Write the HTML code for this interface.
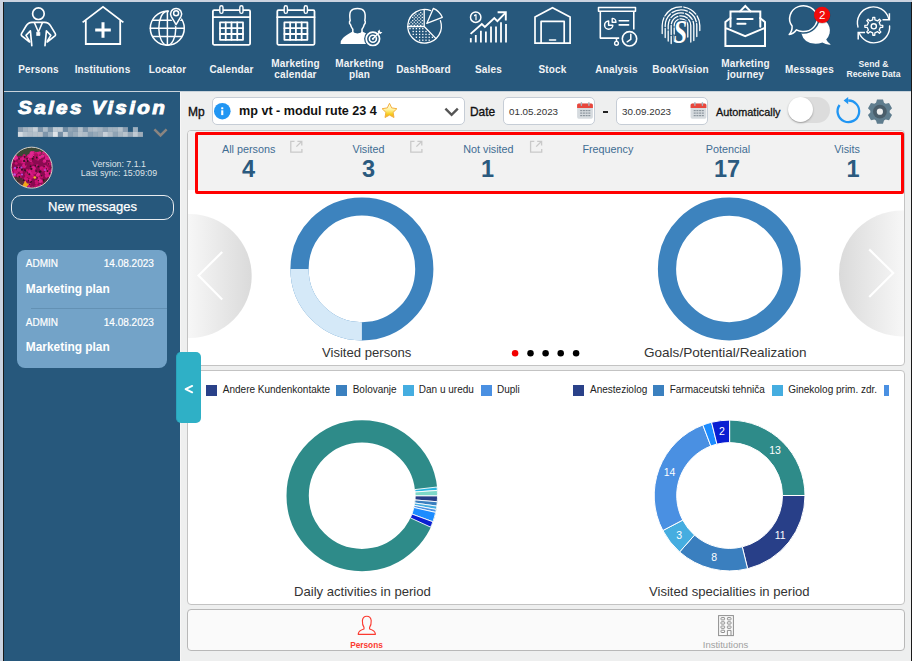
<!DOCTYPE html>
<html><head><meta charset="utf-8">
<style>
*{margin:0;padding:0;box-sizing:border-box}
html,body{width:912px;height:661px;overflow:hidden;background:#cbd3e0;font-family:"Liberation Sans",sans-serif}
.abs{position:absolute}
#app{position:absolute;left:3px;top:2px;width:909px;height:659px;background:#27587c;border-left:1px solid #1a1a1a;border-right:1px solid #1a1a1a}
.hl{position:absolute;color:#f2f4f6;font-weight:bold;font-size:10px;letter-spacing:0.15px;text-align:center;white-space:nowrap;line-height:10.5px}
#main{position:absolute;left:180px;top:92px;width:731px;height:569px;background:#eeefef}
.panel{position:absolute;background:#fff;border:1px solid #c3c3c3;border-radius:4px}
.lbl{position:absolute;color:#3f6d92;font-size:10.8px;white-space:nowrap}
.num{position:absolute;color:#2b5a7f;font-size:23.5px;font-weight:bold;white-space:nowrap;line-height:24px}
.ctitle{position:absolute;color:#333;font-size:13.1px;white-space:nowrap}
.leg{position:absolute;font-size:10px;color:#222;white-space:nowrap;margin-top:0.5px}
.msg{color:#fff;font-size:10px;line-height:11px;white-space:nowrap;-webkit-text-stroke:0.2px #fff}
.msgt{color:#fff;font-size:11.9px;font-weight:bold;line-height:13px;white-space:nowrap}
.sq{position:absolute;width:11px;height:10.5px}
</style></head><body>
<div id="app"></div>
<!-- header separator line -->
<div class="abs" style="left:4px;top:91px;width:907px;height:1px;background:#c9d3db"></div>


<svg class="abs" style="left:0;top:0" width="912" height="92" viewBox="0 0 912 92" fill="none" stroke="#fff" stroke-linecap="round" stroke-linejoin="round">
<!-- persons -->
<circle cx="38.4" cy="13.7" r="5.8" stroke-width="1.7"/>
<path stroke-width="1.65" d="M31.8,45.6 L30.4,30.8 L26,35.4 L29.2,40.6 M29.6,42 L21.8,35.8 Q20.8,34.8 21.5,33.6 L26.2,25.8 Q28.2,22.4 32,22.4 L44.8,22.4 Q48.6,22.4 50.6,25.8 L55.3,33.6 Q56,34.8 55,35.8 L47.2,42 M47.6,40.6 L50.8,35.4 L46.4,30.8 L45,45.6"/>
<path stroke-width="1.5" d="M34.4,22.6 L38.4,32 L42.4,22.6"/>
<rect x="36.9" y="32.2" width="3" height="3.3" fill="#fff" stroke-width="0.7"/>
<!-- institutions -->
<path stroke-width="1.8" stroke-linecap="butt" stroke-linejoin="miter" d="M82.6,22.4 L103,6.8 L123.4,22.4 M85.8,20.2 L85.8,44 L120.2,44 L120.2,20.2"/>
<path stroke-width="3" stroke-linecap="butt" d="M95.2,30 L110.8,30 M103,22.2 L103,37.8"/>
<!-- locator -->
<circle cx="167.3" cy="28.2" r="17" stroke-width="1.5"/>
<line x1="167.4" y1="11.2" x2="167.4" y2="45.2" stroke-width="1.5"/>
<ellipse cx="167.3" cy="28.2" rx="8.5" ry="17" stroke-width="1.5"/>
<line x1="150.3" y1="28.2" x2="184.3" y2="28.2" stroke-width="1.5"/>
<line x1="152.8" y1="20.2" x2="181.8" y2="20.2" stroke-width="1.5"/>
<line x1="152.8" y1="36.4" x2="181.8" y2="36.4" stroke-width="1.5"/>
<path fill="#27587c" stroke="#27587c" stroke-width="2.6" d="M176.1,24.9 L171.1,16.6 A6.1,6.1 0 1 1 181.1,16.6 Z"/>
<path fill="#27587c" stroke-width="1.5" d="M176.1,24.6 L171.3,16.6 A5.5,5.5 0 1 1 180.9,16.6 Z"/>
<circle cx="176.1" cy="13.2" r="2.5" stroke-width="1.5"/>
<!-- calendars -->
<g transform="translate(0,0)">
<rect x="212.9" y="10.2" width="37.2" height="34.6" rx="1.2" stroke-width="1.8"/>
<line x1="212.9" y1="17.2" x2="250.1" y2="17.2" stroke-width="1.8"/>
<rect x="219.8" y="5.8" width="3.2" height="7.6" rx="1.6" fill="#27587c" stroke-width="1.4"/>
<rect x="239.8" y="5.8" width="3.2" height="7.6" rx="1.6" fill="#27587c" stroke-width="1.4"/>
<rect x="220" y="22.4" width="23" height="17.4" stroke-width="1.8"/>
<line x1="225.75" y1="22.4" x2="225.75" y2="39.8" stroke-width="1.8"/>
<line x1="231.5" y1="22.4" x2="231.5" y2="39.8" stroke-width="1.8"/>
<line x1="237.25" y1="22.4" x2="237.25" y2="39.8" stroke-width="1.8"/>
<line x1="220" y1="28.2" x2="243" y2="28.2" stroke-width="1.8"/>
<line x1="220" y1="34" x2="243" y2="34" stroke-width="1.8"/>
</g>
<g transform="translate(64.4,0)">
<rect x="212.9" y="10.2" width="37.2" height="34.6" rx="1.2" stroke-width="1.8"/>
<line x1="212.9" y1="17.2" x2="250.1" y2="17.2" stroke-width="1.8"/>
<rect x="219.8" y="5.8" width="3.2" height="7.6" rx="1.6" fill="#27587c" stroke-width="1.4"/>
<rect x="239.8" y="5.8" width="3.2" height="7.6" rx="1.6" fill="#27587c" stroke-width="1.4"/>
<rect x="220" y="22.4" width="23" height="17.4" stroke-width="1.8"/>
<line x1="225.75" y1="22.4" x2="225.75" y2="39.8" stroke-width="1.8"/>
<line x1="231.5" y1="22.4" x2="231.5" y2="39.8" stroke-width="1.8"/>
<line x1="237.25" y1="22.4" x2="237.25" y2="39.8" stroke-width="1.8"/>
<line x1="220" y1="28.2" x2="243" y2="28.2" stroke-width="1.8"/>
<line x1="220" y1="34" x2="243" y2="34" stroke-width="1.8"/>
</g>
<!-- marketing plan -->
<path stroke-width="1.5" d="M352.8,32.6 L352.8,29.2 Q351,27 350.4,24.4 Q349.2,23.8 349.5,21.8 Q349.8,21 350.2,20.6 Q349.2,14 350.6,11.4 Q352.6,8.6 357.4,8.6 Q362.4,8.6 364.2,11.4 Q365.8,14 364.8,20.6 Q365.4,21.2 365.3,22 Q365.4,23.8 364.3,24.4 Q363.8,27 362,29.2 L362,32.6"/>
<path fill="#fff" stroke="none" d="M352.6,31.6 Q353.8,33.4 357.4,33.4 Q361,33.4 362.2,31.6 L368,34.2 L376,44 L340.6,44 Q340.6,40 343,38 Q345,35.8 352.6,31.6Z"/>
<circle cx="372.9" cy="38.8" r="8.8" fill="#27587c" stroke="none"/>
<circle cx="372.9" cy="38.8" r="6.7" stroke-width="1.7"/>
<circle cx="372.9" cy="38.8" r="3.5" stroke-width="1.6"/>
<circle cx="372.9" cy="38.8" r="1.1" fill="#fff" stroke="none"/>
<line x1="373.2" y1="38.5" x2="379" y2="32.6" stroke-width="1.4"/>
<path fill="#fff" stroke="none" d="M377.6,31.6 L379.6,29.4 L380,31.8 L382.4,32.2 L380.2,34.2 Z"/>
<!-- dashboard -->
<g fill="#fff" stroke="none"><rect x="420.10" y="12.00" width="1.2" height="1.2"/><rect x="415.30" y="13.60" width="1.2" height="1.2"/><rect x="418.50" y="13.60" width="1.2" height="1.2"/><rect x="421.70" y="13.60" width="1.2" height="1.2"/><rect x="413.70" y="15.20" width="1.2" height="1.2"/><rect x="416.90" y="15.20" width="1.2" height="1.2"/><rect x="420.10" y="15.20" width="1.2" height="1.2"/><rect x="412.10" y="16.80" width="1.2" height="1.2"/><rect x="415.30" y="16.80" width="1.2" height="1.2"/><rect x="418.50" y="16.80" width="1.2" height="1.2"/><rect x="421.70" y="16.80" width="1.2" height="1.2"/><rect x="413.70" y="18.40" width="1.2" height="1.2"/><rect x="416.90" y="18.40" width="1.2" height="1.2"/><rect x="420.10" y="18.40" width="1.2" height="1.2"/><rect x="412.10" y="20.00" width="1.2" height="1.2"/><rect x="415.30" y="20.00" width="1.2" height="1.2"/><rect x="418.50" y="20.00" width="1.2" height="1.2"/><rect x="421.70" y="20.00" width="1.2" height="1.2"/><rect x="410.50" y="21.60" width="1.2" height="1.2"/><rect x="413.70" y="21.60" width="1.2" height="1.2"/><rect x="416.90" y="21.60" width="1.2" height="1.2"/><rect x="420.10" y="21.60" width="1.2" height="1.2"/><rect x="408.90" y="23.20" width="1.2" height="1.2"/><rect x="412.10" y="23.20" width="1.2" height="1.2"/><rect x="415.30" y="23.20" width="1.2" height="1.2"/><rect x="418.50" y="23.20" width="1.2" height="1.2"/><rect x="421.70" y="23.20" width="1.2" height="1.2"/><rect x="410.50" y="24.80" width="1.2" height="1.2"/><rect x="413.70" y="24.80" width="1.2" height="1.2"/><rect x="416.90" y="24.80" width="1.2" height="1.2"/><rect x="420.10" y="24.80" width="1.2" height="1.2"/><rect x="409.35" y="27.95" width="1.3" height="1.3"/><rect x="412.55" y="27.95" width="1.3" height="1.3"/><rect x="415.75" y="27.95" width="1.3" height="1.3"/><rect x="418.95" y="27.95" width="1.3" height="1.3"/><rect x="422.15" y="27.95" width="1.3" height="1.3"/><rect x="412.55" y="30.85" width="1.3" height="1.3"/><rect x="415.75" y="30.85" width="1.3" height="1.3"/><rect x="418.95" y="30.85" width="1.3" height="1.3"/><rect x="422.15" y="30.85" width="1.3" height="1.3"/><rect x="425.35" y="30.85" width="1.3" height="1.3"/><rect x="412.55" y="33.75" width="1.3" height="1.3"/><rect x="415.75" y="33.75" width="1.3" height="1.3"/><rect x="418.95" y="33.75" width="1.3" height="1.3"/><rect x="422.15" y="33.75" width="1.3" height="1.3"/><rect x="425.35" y="33.75" width="1.3" height="1.3"/><rect x="428.55" y="33.75" width="1.3" height="1.3"/><rect x="415.75" y="36.65" width="1.3" height="1.3"/><rect x="418.95" y="36.65" width="1.3" height="1.3"/><rect x="422.15" y="36.65" width="1.3" height="1.3"/><rect x="425.35" y="36.65" width="1.3" height="1.3"/><rect x="428.55" y="36.65" width="1.3" height="1.3"/><rect x="431.75" y="36.65" width="1.3" height="1.3"/><rect x="418.95" y="39.55" width="1.3" height="1.3"/><rect x="422.15" y="39.55" width="1.3" height="1.3"/><rect x="425.35" y="39.55" width="1.3" height="1.3"/><rect x="428.55" y="39.55" width="1.3" height="1.3"/></g>
<path stroke-width="1.3" d="M430.6,10.6 A16.8,16.8 0 1 0 440.4,20.6"/>
<path stroke-width="1.3" d="M424.2,9.7 L424.2,26.5 L407.6,26.5 M424.2,26.5 L435.8,38.4"/>
<path stroke-width="1.3" d="M426.8,23.4 L433.3,8.4 A17,17 0 0 1 442.3,17.3 Z"/>
<!-- sales -->
<g stroke-width="1.8" stroke-linecap="butt">
<line x1="470.8" y1="42.4" x2="470.8" y2="38.1"/>
<line x1="475.8" y1="42.4" x2="475.8" y2="35"/>
<line x1="480.9" y1="42.4" x2="480.9" y2="30.8"/>
<line x1="485.9" y1="42.4" x2="485.9" y2="31.5"/>
<line x1="491" y1="42.4" x2="491" y2="26.6"/>
<line x1="496" y1="42.4" x2="496" y2="26.6"/>
<line x1="501" y1="42.4" x2="501" y2="22.2"/>
<line x1="506" y1="42.4" x2="506" y2="24"/>
</g>
<path stroke-width="1.9" stroke-linecap="butt" stroke-linejoin="miter" d="M470.6,33.9 L481.8,24 L484.9,27 L494.3,18 L497.4,21.2 L505.4,12.8"/>
<path stroke-width="1.9" stroke-linecap="butt" stroke-linejoin="miter" d="M497.6,12.2 L505.8,12.2 L505.8,20.6"/>
<circle cx="475.7" cy="17.2" r="5.2" stroke-width="1.5"/>
<path fill="#fff" stroke="none" d="M475,14.2 L476.6,14.2 L476.6,20.2 L475.4,20.2 L475.4,15.8 L474,16.4 L474,15.2 Z"/>
<!-- stock -->
<path stroke-width="1.7" stroke-linejoin="miter" stroke-linecap="butt" d="M535,43.1 L535,17 L552.5,7.8 L570.1,17 L570.1,43.1 Z"/>
<path stroke-width="1.7" stroke-linecap="butt" d="M541.1,43.1 L541.1,21.4 L564.2,21.4 L564.2,43.1"/>
<line x1="549.5" y1="40" x2="555.6" y2="40" stroke-width="1.5"/>
<!-- analysis -->
<rect x="598.5" y="7.6" width="37" height="3.6" stroke-width="1.5"/>
<path stroke-width="1.6" stroke-linecap="butt" d="M600.3,11.2 L600.3,38.1 L619.2,38.1 M633.8,11.2 L633.8,29.4 M616.5,38.1 L616.5,41"/>
<circle cx="616.5" cy="43.3" r="1.9" stroke-width="1.4"/>
<circle cx="629.5" cy="38.8" r="7.2" stroke-width="1.6"/>
<path stroke-width="1.5" d="M630.8,34.2 L630.8,39.4 L627.2,41.8"/>
<path stroke-width="1.5" d="M608.6,21 A4.1,4.1 0 1 0 612.8,25.2 L608.6,25.2 Z"/>
<path stroke-width="1.4" d="M612.2,18.4 L612.2,22.2 L616,22.2 A3.8,3.8 0 0 0 612.2,18.4 Z"/>
<line x1="619.2" y1="20.7" x2="628.6" y2="20.7" stroke-width="1.6"/>
<line x1="619.2" y1="24.9" x2="628.6" y2="24.9" stroke-width="1.6"/>
<!-- bookvision -->
<g stroke-width="1.3" stroke-linecap="round"><path stroke-dasharray="16 2 20 2.2 14 2.2 30" d="M662.20,33.5 L662.20,25.6 A18.8,18.8 0 0 1 699.80,25.6 L699.80,30.5"/>
<path stroke-dasharray="9 2 14 2 16 2.2 12 2 30" d="M665.20,37.5 L665.20,25.6 A15.8,15.8 0 0 1 696.80,25.6 L696.80,36.5"/>
<path stroke-dasharray="10 2 10 2 14 2 9 2 30" d="M668.20,41 L668.20,25.6 A12.8,12.8 0 0 1 693.80,25.6 L693.80,40.5"/>
<path stroke-dasharray="7 2 9 2 10 2 8 2 30" d="M671.20,43.5 L671.20,25.6 A9.8,9.8 0 0 1 690.80,25.6 L690.80,42"/>
<path stroke-dasharray="5 2 6 2 8 2 30" d="M674.20,41 L674.20,25.6 A6.8,6.8 0 0 1 687.80,25.6 L687.80,37"/></g>
<text x="0" y="0" fill="#fff" stroke="#27587c" stroke-width="2.2" paint-order="stroke" font-family="Liberation Serif" font-style="italic" font-weight="bold" font-size="34" text-anchor="middle" transform="translate(680.4,43.4) scale(0.72,1)">S</text>
<!-- marketing journey -->
<path stroke-width="2" stroke-linejoin="miter" d="M725.4,22 L725.4,45.9 L765,45.9 L765,22 M725.4,22 L730.5,18 M765,22 L760,18 M725.4,27.8 L745.2,36.2 L765,27.8 M740,11.4 L745.3,6 L750.6,11.4"/>
<path stroke-width="2" stroke-linejoin="miter" d="M730.5,26.8 L730.5,11.4 L760.3,11.4 L760.3,26.8"/>
<line x1="737.4" y1="19" x2="752.6" y2="19" stroke-width="2"/>
<line x1="737.4" y1="23.8" x2="745.5" y2="23.8" stroke-width="2"/>
<!-- messages -->
<path fill="#fff" stroke="none" d="M801.2,33 A14.5,13.2 0 1 1 826.2,39.4 Q827.6,42.4 830.8,44.6 Q826,45 822.4,42.6 Q819,43.8 815.6,43.8 Q804,43.8 801.2,33 Z"/>
<path fill="#27587c" stroke="#27587c" stroke-width="4.5" d="M802.2,31.45 A13.8,12.9 0 1 0 792.1,26.0 Q792.4,31.2 789.2,34.5 Q793.6,34 796.5,29.8 Q799.2,31.3 802.2,31.45 Z"/>
<path fill="none" stroke="#fff" stroke-width="1.5" stroke-linejoin="round" d="M802.2,31.45 A13.8,12.9 0 1 0 792.1,26.0 Q792.4,31.2 789.2,34.5 Q793.6,34 796.5,29.8 Q799.2,31.3 802.2,31.45 Z"/>
<circle cx="822.3" cy="15.7" r="8.1" fill="rgba(0,0,0,0.22)" stroke="none"/>
<circle cx="822.1" cy="14.9" r="8.1" fill="#f20a0a" stroke="none"/>
<text x="822.1" y="19" fill="#fff" stroke="none" font-family="Liberation Sans" font-size="11.5" text-anchor="middle">2</text>
<!-- sync -->
<path stroke-width="1.4" d="M858,27 A15.8,15.8 0 0 1 888.7,18.6"/>
<path stroke-width="1.5" stroke-linejoin="miter" stroke-linecap="butt" d="M882.5,19.8 L889.4,19.8 L889.4,13.2"/>
<path stroke-width="1.4" d="M889.6,26 A15.8,15.8 0 0 1 859.2,33"/>
<path stroke-width="1.5" stroke-linejoin="miter" stroke-linecap="butt" d="M865,32.6 L858.2,32.6 L858.2,39.4"/>
<path stroke-width="1.3" d="M872.72,19.79 L872.81,17.35 L874.79,17.35 L874.88,19.79 L877.64,20.93 L879.43,19.28 L880.82,20.67 L879.17,22.46 L880.31,25.22 L882.75,25.31 L882.75,27.29 L880.31,27.38 L879.17,30.14 L880.82,31.93 L879.43,33.32 L877.64,31.67 L874.88,32.81 L874.79,35.25 L872.81,35.25 L872.72,32.81 L869.96,31.67 L868.17,33.32 L866.78,31.93 L868.43,30.14 L867.29,27.38 L864.85,27.29 L864.85,25.31 L867.29,25.22 L868.43,22.46 L866.78,20.67 L868.17,19.28 L869.96,20.93Z"/>
<circle cx="873.8" cy="26.3" r="2.6" stroke-width="1.4"/>
</svg>

<!-- header labels -->
<div class="hl" style="left:8px;top:64.5px;width:61px">Persons</div>
<div class="hl" style="left:72px;top:64.5px;width:61px">Institutions</div>
<div class="hl" style="left:137px;top:64.5px;width:61px">Locator</div>
<div class="hl" style="left:201px;top:64.5px;width:61px">Calendar</div>
<div class="hl" style="left:265px;top:59px;width:61px">Marketing<br>calendar</div>
<div class="hl" style="left:329px;top:59px;width:61px">Marketing<br>plan</div>
<div class="hl" style="left:393px;top:64.5px;width:61px">DashBoard</div>
<div class="hl" style="left:458px;top:64.5px;width:61px">Sales</div>
<div class="hl" style="left:522px;top:64.5px;width:61px">Stock</div>
<div class="hl" style="left:586px;top:64.5px;width:61px">Analysis</div>
<div class="hl" style="left:650px;top:64.5px;width:61px">BookVision</div>
<div class="hl" style="left:715px;top:59px;width:61px">Marketing<br>journey</div>
<div class="hl" style="left:779px;top:64.5px;width:61px">Messages</div>
<div class="hl" style="left:843px;top:60.2px;width:61px;font-size:8.6px;line-height:9.7px;letter-spacing:0.05px">Send &amp;<br>Receive Data</div>

<!-- SIDEBAR -->
<div class="abs" style="left:17.5px;top:98.3px;width:149px;height:20px;color:#fff;font-weight:bold;font-style:italic;font-size:17.5px;letter-spacing:2px;-webkit-text-stroke:0.9px #fff;white-space:nowrap;transform-origin:0 0;transform:scaleX(1.18)">Sales Vision</div>


<svg class="abs" style="left:0;top:92px" width="180" height="140" viewBox="0 92 180 140">
<rect x="17.90" y="127.1" width="5.05" height="4.85" fill="#8a9db0"/><rect x="22.90" y="127.1" width="5.05" height="4.85" fill="#a5b3c0"/><rect x="27.90" y="127.1" width="5.05" height="4.85" fill="#b0bcc7"/><rect x="32.90" y="127.1" width="5.05" height="4.85" fill="#c8d0d8"/><rect x="37.90" y="127.1" width="5.05" height="4.85" fill="#7f96ab"/><rect x="42.90" y="127.1" width="5.05" height="4.85" fill="#aebcc8"/><rect x="47.90" y="127.1" width="5.05" height="4.85" fill="#7d95aa"/><rect x="52.90" y="127.1" width="5.05" height="4.85" fill="#c0cbd4"/><rect x="57.90" y="127.1" width="5.05" height="4.85" fill="#c0cbd4"/><rect x="62.90" y="127.1" width="5.05" height="4.85" fill="#6f8ba3"/><rect x="67.90" y="127.1" width="5.05" height="4.85" fill="#94a7b7"/><rect x="72.90" y="127.1" width="5.05" height="4.85" fill="#8a9eb0"/><rect x="77.90" y="127.1" width="5.05" height="4.85" fill="#b5c1cb"/><rect x="82.90" y="127.1" width="5.05" height="4.85" fill="#7f96ab"/><rect x="87.90" y="127.1" width="5.05" height="4.85" fill="#a8b5c1"/><rect x="92.90" y="127.1" width="5.05" height="4.85" fill="#b0bcc7"/><rect x="97.90" y="127.1" width="5.05" height="4.85" fill="#a5b3c0"/><rect x="102.90" y="127.1" width="5.05" height="4.85" fill="#8fa2b3"/><rect x="107.90" y="127.1" width="5.05" height="4.85" fill="#a2b2bf"/><rect x="112.90" y="127.1" width="5.05" height="4.85" fill="#a2b2bf"/><rect x="117.90" y="127.1" width="5.05" height="4.85" fill="#b5c1cb"/><rect x="122.90" y="127.1" width="5.05" height="4.85" fill="#8a9db0"/><rect x="132.90" y="127.1" width="5.05" height="4.85" fill="#9eb0bf"/><rect x="17.90" y="131.9" width="5.05" height="5" fill="#d5dce2"/><rect x="22.90" y="131.9" width="5.05" height="5" fill="#b8c4ce"/><rect x="27.90" y="131.9" width="5.05" height="5" fill="#b0bcc7"/><rect x="32.90" y="131.9" width="5.05" height="5" fill="#b5c1cb"/><rect x="37.90" y="131.9" width="5.05" height="5" fill="#b8c0c8"/><rect x="42.90" y="131.9" width="5.05" height="5" fill="#7f96ab"/><rect x="47.90" y="131.9" width="5.05" height="5" fill="#9fb1c0"/><rect x="52.90" y="131.9" width="5.05" height="5" fill="#dfe4e8"/><rect x="57.90" y="131.9" width="5.05" height="5" fill="#7790a6"/><rect x="62.90" y="131.9" width="5.05" height="5" fill="#c5ced6"/><rect x="67.90" y="131.9" width="5.05" height="5" fill="#8aa0b3"/><rect x="72.90" y="131.9" width="5.05" height="5" fill="#9aacbb"/><rect x="77.90" y="131.9" width="5.05" height="5" fill="#b5c1cb"/><rect x="82.90" y="131.9" width="5.05" height="5" fill="#aebcc8"/><rect x="87.90" y="131.9" width="5.05" height="5" fill="#8aa0b3"/><rect x="92.90" y="131.9" width="5.05" height="5" fill="#97a9b8"/><rect x="97.90" y="131.9" width="5.05" height="5" fill="#a0aebb"/><rect x="102.90" y="131.9" width="5.05" height="5" fill="#c8d0d8"/><rect x="107.90" y="131.9" width="5.05" height="5" fill="#b0bcc7"/><rect x="112.90" y="131.9" width="5.05" height="5" fill="#8fa3b4"/><rect x="117.90" y="131.9" width="5.05" height="5" fill="#a8b6c2"/><rect x="122.90" y="131.9" width="5.05" height="5" fill="#b8c3cc"/><rect x="127.90" y="131.9" width="5.05" height="5" fill="#94a6b6"/><rect x="132.90" y="131.9" width="5.05" height="5" fill="#c0cad3"/><rect x="137.90" y="131.9" width="5.05" height="5" fill="#9eacb9"/>
<path d="M154.4,129.4 L160.5,135.5 L166.6,129.4" fill="none" stroke="#8b8580" stroke-width="2.5"/>
<defs><clipPath id="avc"><circle cx="31.65" cy="167.65" r="20.4"/></clipPath></defs>
<g clip-path="url(#avc)">
<rect x="10" y="146" width="44" height="44" fill="#8a0a50"/>
<rect x="10" y="146" width="44" height="10" fill="#3a4836"/>
<circle cx="30.0" cy="174.0" r="2.2" fill="#e02890"/><circle cx="30.0" cy="184.1" r="1.2" fill="#bf0f6a"/><circle cx="32.5" cy="176.4" r="2.0" fill="#c8106e"/><circle cx="29.8" cy="159.8" r="1.7" fill="#d81c88"/><circle cx="37.6" cy="175.2" r="1.5" fill="#e02890"/><circle cx="38.5" cy="175.9" r="1.2" fill="#c8106e"/><circle cx="45.9" cy="157.1" r="1.0" fill="#d41a82"/><circle cx="36.2" cy="181.5" r="1.4" fill="#cc1478"/><circle cx="46.4" cy="172.7" r="1.8" fill="#e02890"/><circle cx="11.2" cy="157.9" r="1.9" fill="#e02890"/><circle cx="52.9" cy="188.9" r="2.1" fill="#d81c88"/><circle cx="21.7" cy="180.8" r="1.7" fill="#c8106e"/><circle cx="13.9" cy="181.1" r="1.5" fill="#bf0f6a"/><circle cx="23.2" cy="157.3" r="1.0" fill="#d81c88"/><circle cx="11.0" cy="162.1" r="2.2" fill="#e02890"/><circle cx="26.8" cy="179.1" r="1.5" fill="#cc1478"/><circle cx="37.4" cy="181.5" r="1.4" fill="#c8106e"/><circle cx="24.1" cy="155.5" r="1.5" fill="#c8106e"/><circle cx="16.7" cy="179.0" r="1.0" fill="#e02890"/><circle cx="44.5" cy="161.0" r="1.7" fill="#e02890"/><circle cx="32.4" cy="188.5" r="2.0" fill="#e02890"/><circle cx="38.0" cy="159.0" r="1.5" fill="#d41a82"/><circle cx="11.0" cy="184.4" r="2.3" fill="#cc1478"/><circle cx="23.8" cy="185.1" r="1.3" fill="#e02890"/><circle cx="52.8" cy="175.5" r="1.8" fill="#c8106e"/><circle cx="52.6" cy="162.3" r="1.3" fill="#bf0f6a"/><circle cx="36.6" cy="183.2" r="1.5" fill="#c8106e"/><circle cx="14.8" cy="174.8" r="1.3" fill="#cc1478"/><circle cx="26.5" cy="176.2" r="1.2" fill="#cc1478"/><circle cx="31.3" cy="174.5" r="2.1" fill="#d41a82"/><circle cx="37.3" cy="165.6" r="1.3" fill="#cc1478"/><circle cx="21.5" cy="161.5" r="2.0" fill="#cc1478"/><circle cx="19.3" cy="187.3" r="2.1" fill="#cc1478"/><circle cx="14.3" cy="156.6" r="1.1" fill="#cc1478"/><circle cx="51.4" cy="163.1" r="1.9" fill="#b00c60"/><circle cx="28.7" cy="185.8" r="1.6" fill="#cc1478"/><circle cx="18.4" cy="179.5" r="1.1" fill="#d41a82"/><circle cx="31.1" cy="177.2" r="1.8" fill="#c8106e"/><circle cx="22.8" cy="186.2" r="1.3" fill="#c8106e"/><circle cx="13.9" cy="169.0" r="1.3" fill="#c8106e"/><circle cx="18.4" cy="167.5" r="1.7" fill="#d41a82"/><circle cx="14.9" cy="159.7" r="1.6" fill="#b00c60"/><circle cx="38.6" cy="178.5" r="1.8" fill="#d41a82"/><circle cx="35.8" cy="186.4" r="1.6" fill="#b00c60"/><circle cx="40.4" cy="187.7" r="1.0" fill="#d81c88"/><circle cx="14.1" cy="157.3" r="1.4" fill="#d41a82"/><circle cx="53.0" cy="157.6" r="1.7" fill="#d81c88"/><circle cx="12.9" cy="186.8" r="2.0" fill="#d41a82"/><circle cx="44.3" cy="186.1" r="1.5" fill="#d81c88"/><circle cx="30.9" cy="157.6" r="2.1" fill="#bf0f6a"/><circle cx="12.3" cy="172.0" r="1.0" fill="#d81c88"/><circle cx="27.1" cy="174.8" r="1.8" fill="#c8106e"/><circle cx="14.8" cy="158.9" r="1.3" fill="#e02890"/><circle cx="41.6" cy="168.2" r="2.0" fill="#cc1478"/><circle cx="30.2" cy="170.7" r="1.7" fill="#cc1478"/><circle cx="42.5" cy="156.0" r="1.8" fill="#e02890"/><circle cx="11.9" cy="187.6" r="1.1" fill="#bf0f6a"/><circle cx="36.8" cy="186.3" r="1.3" fill="#c8106e"/><circle cx="26.5" cy="159.9" r="1.8" fill="#cc1478"/><circle cx="18.1" cy="185.8" r="1.9" fill="#e02890"/><circle cx="31.9" cy="163.2" r="1.5" fill="#b00c60"/><circle cx="19.3" cy="169.7" r="2.0" fill="#d41a82"/><circle cx="48.0" cy="168.1" r="1.8" fill="#b00c60"/><circle cx="19.8" cy="159.6" r="1.5" fill="#bf0f6a"/><circle cx="12.7" cy="157.2" r="2.3" fill="#bf0f6a"/><circle cx="18.1" cy="170.3" r="1.4" fill="#d41a82"/><circle cx="45.9" cy="168.0" r="1.7" fill="#d81c88"/><circle cx="24.2" cy="183.5" r="2.3" fill="#e02890"/><circle cx="24.5" cy="183.2" r="1.4" fill="#cc1478"/><circle cx="12.7" cy="179.1" r="1.7" fill="#b00c60"/><circle cx="38.3" cy="174.2" r="1.8" fill="#e02890"/><circle cx="30.1" cy="155.8" r="2.1" fill="#d41a82"/><circle cx="43.7" cy="182.1" r="2.3" fill="#c8106e"/><circle cx="29.8" cy="176.4" r="1.9" fill="#bf0f6a"/><circle cx="26.5" cy="157.7" r="1.3" fill="#bf0f6a"/><circle cx="31.0" cy="161.1" r="1.0" fill="#e02890"/><circle cx="33.5" cy="156.2" r="1.3" fill="#bf0f6a"/><circle cx="25.5" cy="178.7" r="1.7" fill="#cc1478"/><circle cx="52.9" cy="160.4" r="2.1" fill="#d81c88"/><circle cx="49.1" cy="158.0" r="2.2" fill="#d81c88"/><circle cx="27.3" cy="170.3" r="1.3" fill="#c8106e"/><circle cx="26.8" cy="174.3" r="2.1" fill="#bf0f6a"/><circle cx="45.4" cy="166.7" r="1.4" fill="#d41a82"/><circle cx="15.2" cy="184.4" r="2.0" fill="#d81c88"/><circle cx="16.2" cy="163.2" r="1.5" fill="#c8106e"/><circle cx="52.0" cy="173.3" r="2.0" fill="#b00c60"/><circle cx="22.0" cy="179.4" r="1.0" fill="#cc1478"/><circle cx="14.5" cy="170.0" r="1.7" fill="#bf0f6a"/><circle cx="22.6" cy="186.3" r="1.3" fill="#bf0f6a"/><circle cx="13.7" cy="182.2" r="1.2" fill="#b00c60"/><circle cx="39.8" cy="186.1" r="1.6" fill="#cc1478"/><circle cx="48.8" cy="172.6" r="1.9" fill="#e02890"/><circle cx="50.7" cy="171.7" r="2.2" fill="#c8106e"/><circle cx="42.8" cy="169.9" r="1.7" fill="#bf0f6a"/><circle cx="41.6" cy="176.7" r="1.7" fill="#bf0f6a"/><circle cx="49.1" cy="163.7" r="1.9" fill="#bf0f6a"/><circle cx="47.5" cy="175.7" r="1.4" fill="#d41a82"/><circle cx="51.7" cy="172.8" r="1.7" fill="#d41a82"/><circle cx="28.3" cy="158.9" r="1.0" fill="#e02890"/><circle cx="12.2" cy="188.0" r="1.7" fill="#e02890"/><circle cx="33.8" cy="188.6" r="1.2" fill="#c8106e"/><circle cx="40.0" cy="157.2" r="1.7" fill="#e02890"/><circle cx="49.7" cy="182.2" r="1.5" fill="#d41a82"/><circle cx="30.9" cy="159.3" r="1.6" fill="#bf0f6a"/><circle cx="50.3" cy="186.3" r="1.7" fill="#c8106e"/><circle cx="19.0" cy="176.0" r="2.2" fill="#d41a82"/><circle cx="40.5" cy="188.2" r="1.0" fill="#d41a82"/><circle cx="20.5" cy="178.4" r="1.4" fill="#b00c60"/><circle cx="21.3" cy="172.0" r="1.6" fill="#cc1478"/><circle cx="16.2" cy="172.4" r="1.3" fill="#d41a82"/><circle cx="40.5" cy="184.9" r="1.0" fill="#d81c88"/><circle cx="28.4" cy="173.0" r="1.2" fill="#d41a82"/><circle cx="47.3" cy="173.2" r="1.3" fill="#d41a82"/><circle cx="46.8" cy="175.8" r="2.1" fill="#d41a82"/><circle cx="49.4" cy="176.3" r="1.5" fill="#d41a82"/><circle cx="24.3" cy="165.7" r="2.2" fill="#d41a82"/><circle cx="43.7" cy="161.6" r="1.1" fill="#d41a82"/><circle cx="16.6" cy="158.0" r="1.5" fill="#e02890"/><circle cx="46.0" cy="169.3" r="2.0" fill="#d41a82"/><circle cx="19.4" cy="176.4" r="2.0" fill="#c8106e"/><circle cx="19.4" cy="178.2" r="2.2" fill="#b00c60"/><circle cx="15.8" cy="172.2" r="2.0" fill="#cc1478"/><circle cx="52.9" cy="183.3" r="2.0" fill="#e02890"/><circle cx="15.5" cy="156.3" r="1.7" fill="#cc1478"/><circle cx="49.0" cy="171.4" r="1.2" fill="#c8106e"/><circle cx="19.6" cy="183.6" r="2.3" fill="#d81c88"/><circle cx="15.0" cy="157.1" r="2.2" fill="#e02890"/><circle cx="14.3" cy="158.3" r="1.5" fill="#e02890"/><circle cx="32.6" cy="169.6" r="1.8" fill="#c8106e"/><circle cx="37.6" cy="156.4" r="1.3" fill="#e02890"/><circle cx="30.1" cy="180.1" r="1.5" fill="#d41a82"/><circle cx="36.4" cy="158.2" r="2.0" fill="#b00c60"/><circle cx="48.5" cy="182.3" r="1.9" fill="#bf0f6a"/><circle cx="49.2" cy="186.9" r="1.7" fill="#d41a82"/><circle cx="32.2" cy="188.4" r="2.0" fill="#b00c60"/><circle cx="22.7" cy="159.0" r="2.0" fill="#d41a82"/><circle cx="45.2" cy="168.8" r="2.2" fill="#cc1478"/><circle cx="40.2" cy="181.1" r="2.0" fill="#e02890"/><circle cx="19.7" cy="161.3" r="2.0" fill="#b00c60"/><circle cx="30.7" cy="155.4" r="1.5" fill="#d81c88"/><circle cx="48.9" cy="156.7" r="1.4" fill="#d81c88"/><circle cx="23.6" cy="162.3" r="1.5" fill="#d41a82"/><circle cx="33.4" cy="168.2" r="2.3" fill="#d81c88"/><circle cx="20.0" cy="159.1" r="1.5" fill="#cc1478"/><circle cx="12.0" cy="175.9" r="2.0" fill="#b00c60"/><circle cx="29.6" cy="172.2" r="2.0" fill="#d81c88"/><circle cx="26.8" cy="158.3" r="1.3" fill="#b00c60"/><circle cx="34.1" cy="172.3" r="2.3" fill="#cc1478"/><circle cx="46.5" cy="158.4" r="1.6" fill="#d81c88"/><circle cx="14.2" cy="175.3" r="2.0" fill="#c8106e"/><circle cx="36.5" cy="156.7" r="1.4" fill="#d41a82"/><circle cx="46.8" cy="154.7" r="1.6" fill="#e02890"/><circle cx="48.8" cy="154.1" r="1.5" fill="#cc1478"/><circle cx="34.9" cy="154.7" r="1.5" fill="#b00c60"/><circle cx="40.3" cy="153.4" r="1.7" fill="#b00c60"/><circle cx="28.6" cy="155.9" r="1.6" fill="#d81c88"/><circle cx="31.4" cy="155.8" r="1.4" fill="#b00c60"/><circle cx="44.5" cy="152.3" r="2.0" fill="#b00c60"/><circle cx="29.6" cy="156.5" r="1.4" fill="#e02890"/><circle cx="33.5" cy="155.8" r="1.0" fill="#c8106e"/><circle cx="48.6" cy="155.6" r="1.5" fill="#bf0f6a"/><circle cx="33.4" cy="155.5" r="1.1" fill="#e02890"/><circle cx="38.0" cy="153.0" r="1.1" fill="#cc1478"/><circle cx="31.4" cy="153.8" r="1.1" fill="#e02890"/><circle cx="38.0" cy="153.3" r="1.6" fill="#e02890"/><circle cx="36.0" cy="155.7" r="1.8" fill="#d41a82"/><circle cx="49.0" cy="155.7" r="1.2" fill="#c8106e"/><circle cx="39.1" cy="153.5" r="1.5" fill="#bf0f6a"/><circle cx="35.9" cy="153.4" r="1.7" fill="#cc1478"/><circle cx="43.4" cy="153.0" r="1.3" fill="#d41a82"/><circle cx="32.2" cy="153.2" r="2.0" fill="#d41a82"/><circle cx="47.3" cy="152.2" r="1.1" fill="#b00c60"/><circle cx="33.7" cy="152.1" r="1.0" fill="#d41a82"/><circle cx="39.9" cy="152.4" r="1.1" fill="#d81c88"/><circle cx="31.5" cy="153.2" r="2.0" fill="#e02890"/><circle cx="38.5" cy="153.1" r="1.3" fill="#d81c88"/><circle cx="30.9" cy="156.3" r="1.8" fill="#e02890"/><circle cx="45.8" cy="155.1" r="1.8" fill="#d41a82"/><circle cx="37.8" cy="155.7" r="1.4" fill="#d41a82"/><circle cx="36.1" cy="155.3" r="2.0" fill="#b00c60"/><circle cx="23.6" cy="180.3" r="1.0" fill="#30141f"/><circle cx="19.4" cy="176.9" r="0.8" fill="#30141f"/><circle cx="30.5" cy="166.4" r="0.8" fill="#30141f"/><circle cx="29.3" cy="174.2" r="1.0" fill="#30141f"/><circle cx="30.5" cy="182.4" r="0.5" fill="#30141f"/><circle cx="24.4" cy="185.1" r="0.9" fill="#30141f"/><circle cx="39.8" cy="171.8" r="1.0" fill="#30141f"/><circle cx="25.1" cy="184.2" r="0.6" fill="#30141f"/><circle cx="38.3" cy="166.5" r="1.0" fill="#30141f"/><circle cx="24.9" cy="170.1" r="0.9" fill="#30141f"/><circle cx="48.1" cy="178.0" r="0.7" fill="#30141f"/><circle cx="33.2" cy="187.8" r="0.8" fill="#30141f"/><circle cx="20.8" cy="187.0" r="0.9" fill="#30141f"/><circle cx="32.6" cy="158.7" r="1.0" fill="#30141f"/><circle cx="13.0" cy="177.7" r="0.9" fill="#30141f"/><circle cx="43.8" cy="179.6" r="0.7" fill="#30141f"/><circle cx="27.6" cy="161.0" r="0.9" fill="#30141f"/><circle cx="19.1" cy="158.9" r="0.8" fill="#30141f"/><circle cx="46.2" cy="182.0" r="0.6" fill="#30141f"/><circle cx="14.3" cy="161.1" r="0.7" fill="#30141f"/><circle cx="12.9" cy="182.9" r="0.8" fill="#30141f"/><circle cx="35.3" cy="165.8" r="0.8" fill="#30141f"/><circle cx="25.4" cy="164.8" r="0.6" fill="#30141f"/><circle cx="24.6" cy="156.8" r="0.9" fill="#30141f"/><circle cx="15.9" cy="182.1" r="0.8" fill="#30141f"/><circle cx="40.5" cy="171.6" r="1.0" fill="#30141f"/><circle cx="25.5" cy="170.7" r="0.7" fill="#30141f"/><circle cx="44.3" cy="166.7" r="0.6" fill="#30141f"/><circle cx="31.5" cy="181.8" r="0.5" fill="#30141f"/><circle cx="36.7" cy="157.5" r="1.0" fill="#30141f"/><circle cx="51.4" cy="167.2" r="0.5" fill="#30141f"/><circle cx="27.1" cy="158.9" r="0.8" fill="#30141f"/><circle cx="33.7" cy="156.8" r="0.7" fill="#30141f"/><circle cx="12.4" cy="159.5" r="1.1" fill="#30141f"/><circle cx="48.6" cy="163.9" r="0.6" fill="#30141f"/><circle cx="37.4" cy="177.9" r="0.7" fill="#30141f"/><circle cx="27.6" cy="172.9" r="0.7" fill="#30141f"/><circle cx="47.4" cy="171.1" r="0.9" fill="#30141f"/><circle cx="24.1" cy="161.0" r="1.1" fill="#30141f"/><circle cx="48.5" cy="180.1" r="0.5" fill="#30141f"/><circle cx="31.2" cy="181.6" r="0.7" fill="#30141f"/><circle cx="19.9" cy="167.5" r="0.9" fill="#30141f"/><circle cx="36.0" cy="171.1" r="0.8" fill="#30141f"/><circle cx="29.7" cy="184.6" r="0.7" fill="#30141f"/><circle cx="48.4" cy="186.0" r="0.9" fill="#30141f"/><circle cx="49.7" cy="173.6" r="1.0" fill="#30141f"/><circle cx="31.4" cy="168.9" r="1.1" fill="#30141f"/><circle cx="38.4" cy="180.7" r="0.6" fill="#30141f"/><circle cx="46.5" cy="168.8" r="0.6" fill="#30141f"/><circle cx="17.4" cy="181.5" r="1.1" fill="#30141f"/><circle cx="43.8" cy="180.8" r="1.0" fill="#30141f"/><circle cx="14.3" cy="185.6" r="1.0" fill="#30141f"/><circle cx="47.0" cy="185.0" r="0.8" fill="#30141f"/><circle cx="21.9" cy="169.5" r="1.0" fill="#30141f"/><circle cx="28.6" cy="180.7" r="0.6" fill="#30141f"/><circle cx="48.3" cy="181.9" r="0.6" fill="#30141f"/><circle cx="41.7" cy="175.8" r="0.8" fill="#30141f"/><circle cx="14.1" cy="174.3" r="0.6" fill="#30141f"/><circle cx="20.2" cy="185.3" r="0.6" fill="#30141f"/><circle cx="17.1" cy="167.3" r="0.9" fill="#30141f"/>
<circle cx="15" cy="168" r="1.2" fill="#b048d8"/>
<circle cx="21.5" cy="167.5" r="1.1" fill="#a848d8"/>
<circle cx="14.5" cy="174.5" r="1.3" fill="#c058e0"/>
<circle cx="22" cy="174.5" r="1.1" fill="#b050d8"/>
<circle cx="45" cy="170" r="1" fill="#b048d8"/>
<path d="M10,176 L22,178 L28,190 L10,190 Z" fill="#2e3a24" opacity="0.75"/>
<path d="M44,180 L54,176 L54,190 L40,190 Z" fill="#2e3a24" opacity="0.6"/>
<path d="M22.5,185.5 L25.4,180.4 L26.8,183.2 L29.2,183.8 L26.2,187.4 L23,187.6 Z" fill="#f2a818"/>
<circle cx="34.8" cy="177.5" r="1.3" fill="#f0c020"/>
</g>
<circle cx="31.65" cy="167.65" r="20.5" fill="none" stroke="#d2d2c8" stroke-width="1"/>
</svg>
<div class="abs" style="left:80px;top:159.5px;width:78px;text-align:center;color:#dfe3e8;font-size:8.8px;line-height:9.6px;white-space:nowrap">Version: 7.1.1<br>Last sync: 15:09:09</div>
<div class="abs" style="left:11px;top:195px;width:163px;height:25px;border:1.3px solid #e8ecf0;border-radius:10px;color:#fff;font-size:13px;text-align:center;line-height:22px;-webkit-text-stroke:0.25px #fff">New messages</div>

<div class="abs" style="left:17.4px;top:250.2px;width:149.6px;height:117.6px;background:#73a3c8;border-radius:8px"></div>
<div class="abs" style="left:31px;top:308px;width:136px;height:1px;background:#6391b4"></div>
<div class="abs msg" style="left:25.8px;top:258px">ADMIN</div>
<div class="abs msg" style="left:103.8px;top:258px">14.08.2023</div>
<div class="abs msgt" style="left:25.8px;top:282.5px">Marketing plan</div>
<div class="abs msg" style="left:25.8px;top:317px">ADMIN</div>
<div class="abs msg" style="left:103.8px;top:317px">14.08.2023</div>
<div class="abs msgt" style="left:25.8px;top:340.8px">Marketing plan</div>


<!-- MAIN -->
<div id="main"></div>
<!-- sidebar left-edge line of main -->
<div class="abs" style="left:180px;top:92px;width:1px;height:569px;background:#f7f6f6"></div>

<!-- toolbar -->
<div class="abs" style="left:188px;top:105px;font-size:12px;color:#111;line-height:14px;-webkit-text-stroke:0.35px #111">Mp</div>
<div class="abs" style="left:212px;top:97px;width:253px;height:28px;background:#fff;border:1px solid #c6cdd6;border-radius:5px"></div>
<svg class="abs" style="left:212px;top:101px" width="22" height="22" viewBox="212 101 22 22"><circle cx="222.3" cy="111.2" r="8.3" fill="#2196f3"/><rect x="221.2" y="107.3" width="2.1" height="2" rx="0.4" fill="#fff"/><rect x="221.2" y="110.3" width="2.1" height="4.8" fill="#fff"/></svg>
<div class="abs" style="left:239px;top:104.3px;font-size:12.6px;font-weight:bold;color:#111;line-height:14px;white-space:nowrap">mp vt - modul rute 23 4</div>
<div class="abs" style="left:470px;top:105px;font-size:11.9px;color:#111;line-height:14px;-webkit-text-stroke:0.35px #111">Date</div>
<div class="abs" style="left:503px;top:97px;width:92px;height:28px;background:#fff;border:1px solid #c6cdd6;border-radius:5px"></div>
<div class="abs" style="left:509px;top:106.2px;font-size:9.8px;color:#333;line-height:11px">01.05.2023</div>
<div class="abs" style="left:603px;top:111.3px;width:4.8px;height:1.6px;background:#222"></div>
<div class="abs" style="left:616px;top:97px;width:92px;height:28px;background:#fff;border:1px solid #c6cdd6;border-radius:5px"></div>
<div class="abs" style="left:622px;top:106.2px;font-size:9.8px;color:#333;line-height:11px">30.09.2023</div>
<div class="abs" style="left:716px;top:105.5px;font-size:10.85px;color:#111;line-height:12px;-webkit-text-stroke:0.3px #111">Automatically</div>
<div class="abs" style="left:788px;top:97px;width:42px;height:26px;border-radius:13px;background:#dcdcdc"></div>
<div class="abs" style="left:788px;top:97px;width:25px;height:25px;border-radius:50%;background:#fff;box-shadow:0 1px 2px rgba(0,0,0,.3)"></div>

<!-- panel 1 (stats + carousel) -->
<div class="panel" style="left:187px;top:130px;width:718px;height:236px"></div>
<div class="abs" style="left:188px;top:131px;width:716px;height:59px;background:#f2f2f2;border-radius:3px 3px 0 0"></div>
<div class="abs" style="left:195px;top:132px;width:709px;height:61.5px;background:#f2f2f2;border:3px solid #ff0000;border-radius:2px"></div>
<div class="lbl" style="left:222px;top:142.5px">All persons</div>
<div class="num" style="left:242px;top:157px">4</div>
<div class="lbl" style="left:352.4px;top:142.5px">Visited</div>
<div class="num" style="left:362px;top:157px">3</div>
<div class="lbl" style="left:463.2px;top:142.5px">Not visited</div>
<div class="num" style="left:481px;top:157px">1</div>
<div class="lbl" style="left:582.4px;top:142.5px">Frequency</div>
<div class="lbl" style="left:705.7px;top:142.5px">Potencial</div>
<div class="num" style="left:714px;top:157px">17</div>
<div class="lbl" style="left:834.3px;top:142.5px">Visits</div>
<div class="num" style="left:846.5px;top:157px">1</div>


<svg class="abs" style="left:0;top:0" width="912" height="661" viewBox="0 0 912 661">
<defs>
<linearGradient id="stg" x1="0" y1="0" x2="0" y2="1"><stop offset="0" stop-color="#fffde8"/><stop offset="0.45" stop-color="#fff3a0"/><stop offset="0.75" stop-color="#f8cf20"/><stop offset="1" stop-color="#f0a818"/></linearGradient>
<linearGradient id="arrL" gradientUnits="userSpaceOnUse" x1="188" y1="0" x2="252" y2="0"><stop offset="0" stop-color="#f7f7f7"/><stop offset="1" stop-color="#dadada"/></linearGradient>
<linearGradient id="arrR" gradientUnits="userSpaceOnUse" x1="839" y1="0" x2="904" y2="0"><stop offset="0" stop-color="#dadada"/><stop offset="1" stop-color="#f7f7f7"/></linearGradient>
<clipPath id="p1c"><rect x="188" y="131" width="716" height="234"/></clipPath>
</defs>
<!-- star -->
<path d="M389.5,103.3 L391.7,107.9 L396.9,108.7 L393.1,112.4 L394,117.5 L389.5,115.1 L385,117.5 L385.9,112.4 L382.1,108.7 L387.3,107.9 Z" fill="url(#stg)" stroke="#f3b040" stroke-width="1" stroke-linejoin="round"/>
<!-- select chevron -->
<path d="M445.4,108.6 L451.6,114.8 L457.8,108.6" fill="none" stroke="#555" stroke-width="2.4"/>
<!-- calendar icons -->
<g id="calA">
<rect x="577.1" y="103.5" width="15.8" height="15.2" rx="1.6" fill="#d6dbdf"/>
<path d="M577.1,107.9 L577.1,105.1 Q577.1,103.5 578.7,103.5 L591.3,103.5 Q592.9,103.5 592.9,105.1 L592.9,107.9 Z" fill="#e8473d"/>
<rect x="580.7" y="102" width="1.4" height="4" rx="0.7" fill="#a9b5bd"/>
<rect x="588.2" y="102" width="1.4" height="4" rx="0.7" fill="#a9b5bd"/>
<g fill="#8b959d">
<rect x="580.2" y="110" width="2" height="1.2"/><rect x="582.9" y="110" width="2" height="1.2"/><rect x="585.6" y="110" width="2" height="1.2"/><rect x="588.3" y="110" width="2" height="1.2"/>
<rect x="580.2" y="112.5" width="2" height="1.2"/><rect x="582.9" y="112.5" width="2" height="1.2"/><rect x="585.6" y="112.5" width="2" height="1.2"/><rect x="588.3" y="112.5" width="2" height="1.2"/>
<rect x="580.2" y="115" width="2" height="1.2"/><rect x="582.9" y="115" width="2" height="1.2"/><rect x="585.6" y="115" width="2" height="1.2"/><rect x="588.3" y="115" width="2" height="1.2"/>
</g>
</g>
<use href="#calA" x="113.5" y="0"/>
<!-- refresh -->
<path d="M848.2,100.5 A10.8,10.8 0 1 1 839.6,105" fill="none" stroke="#2196f3" stroke-width="2.3"/>
<path d="M843.6,100.6 L848.2,96.9 L848.2,104.2 Z" fill="#2196f3"/>
<!-- gear -->
<path d="M876.00,102.76 L877.00,99.47 L883.00,99.47 L884.00,102.76 A9.7,9.7 0 0 1 885.65,103.72 L889.01,102.93 L892.01,108.13 L889.65,110.65 A9.7,9.7 0 0 1 889.65,112.55 L892.01,115.07 L889.01,120.27 L885.65,119.48 A9.7,9.7 0 0 1 884.00,120.44 L883.00,123.73 L877.00,123.73 L876.00,120.44 A9.7,9.7 0 0 1 874.35,119.48 L870.99,120.27 L867.99,115.07 L870.35,112.55 A9.7,9.7 0 0 1 870.35,110.65 L867.99,108.13 L870.99,102.93 L874.35,103.72 A9.7,9.7 0 0 1 876.00,102.76Z" fill="#5f7d8e"/>
<circle cx="879.9" cy="111.7" r="6.9" fill="#4a5e6b"/>
<circle cx="879.9" cy="111.7" r="3.1" fill="#eeefef"/>
<!-- ext icons -->
<path d="M294.5,141.29999999999998 L290.8,141.29999999999998 L290.8,152.1 L301.90000000000003,152.1 L301.90000000000003,149.0" fill="none" stroke="#c9c9c9" stroke-width="1.3"/><path d="M296.40000000000003,146.6 L301.6,141.5 M297.40000000000003,141.29999999999998 L301.8,141.29999999999998 L301.8,145.5" fill="none" stroke="#c9c9c9" stroke-width="1.3"/>
<path d="M414.5,141.29999999999998 L410.8,141.29999999999998 L410.8,152.1 L421.90000000000003,152.1 L421.90000000000003,149.0" fill="none" stroke="#c9c9c9" stroke-width="1.3"/><path d="M416.40000000000003,146.6 L421.6,141.5 M417.40000000000003,141.29999999999998 L421.8,141.29999999999998 L421.8,145.5" fill="none" stroke="#c9c9c9" stroke-width="1.3"/>
<path d="M534.3000000000001,141.29999999999998 L530.6,141.29999999999998 L530.6,152.1 L541.7,152.1 L541.7,149.0" fill="none" stroke="#c9c9c9" stroke-width="1.3"/><path d="M536.2,146.6 L541.4,141.5 M537.2,141.29999999999998 L541.6,141.29999999999998 L541.6,145.5" fill="none" stroke="#c9c9c9" stroke-width="1.3"/>
<!-- carousel arrows -->
<g clip-path="url(#p1c)">
<circle cx="189.7" cy="276" r="62" fill="url(#arrL)"/>
<circle cx="902" cy="273.4" r="63" fill="url(#arrR)"/>
</g>
<path d="M222.2,252 L198.5,275.5 L222.2,299.5" fill="none" stroke="#fff" stroke-width="2.2"/>
<path d="M869.2,249.4 L893.2,273 L869.2,297" fill="none" stroke="#fff" stroke-width="2.2"/>
<!-- donut 1 -->
<circle cx="361.9" cy="268.9" r="62.4" fill="none" stroke="#3d83be" stroke-width="18.2"/>
<path d="M361.9,331.3 A62.4,62.4 0 0 1 299.5,268.9" fill="none" stroke="#d5e9f8" stroke-width="18.2"/>
<!-- donut 2 -->
<circle cx="729.3" cy="269" r="62.3" fill="none" stroke="#3d83be" stroke-width="18.2"/>
<!-- dots -->
<circle cx="515.1" cy="353.2" r="3.25" fill="#f20000"/>
<circle cx="530.5" cy="353.2" r="3.25" fill="#000"/>
<circle cx="545.6" cy="353.2" r="3.25" fill="#000"/>
<circle cx="560.7" cy="353.2" r="3.25" fill="#000"/>
<circle cx="576.1" cy="353.2" r="3.25" fill="#000"/>
</svg>

<div class="ctitle" style="left:322px;top:345px">Visited persons</div>
<div class="ctitle" style="left:644px;top:345px;font-size:13.55px">Goals/Potential/Realization</div>

<!-- panel 2 -->
<div class="panel" style="left:187px;top:370px;width:718px;height:235px"></div>
<div class="ctitle" style="left:294px;top:584px">Daily activities in period</div>
<div class="ctitle" style="left:649px;top:584px">Visited specialities in period</div>

<div class="sq" style="left:206px;top:385.2px;background:#2a4189"></div>
<div class="leg" style="left:222.8px;top:383.5px">Andere Kundenkontakte</div>
<div class="sq" style="left:336.2px;top:385.2px;background:#3b80bf"></div>
<div class="leg" style="left:352.7px;top:383.5px">Bolovanje</div>
<div class="sq" style="left:402.6px;top:385.2px;background:#45ade0"></div>
<div class="leg" style="left:418.8px;top:383.5px">Dan u uredu</div>
<div class="sq" style="left:480.8px;top:385.2px;background:#4a90e2"></div>
<div class="leg" style="left:497px;top:383.5px">Dupli</div>

<div class="sq" style="left:573.2px;top:385.2px;background:#2a4189"></div>
<div class="leg" style="left:590px;top:383.5px">Anesteziolog</div>
<div class="sq" style="left:653.4px;top:385.2px;background:#3b80bf"></div>
<div class="leg" style="left:669.7px;top:383.5px">Farmaceutski tehniča</div>
<div class="sq" style="left:771.6px;top:385.2px;background:#45ade0"></div>
<div class="leg" style="left:788.2px;top:383.5px">Ginekolog prim. zdr.</div>
<div class="sq" style="left:883.5px;top:385.2px;width:5px;background:#4a90e2"></div>

<!-- tab bar -->
<div class="abs" style="left:187px;top:609px;width:718px;height:42px;background:#fafafa;border:1px solid #b8b8b8;border-radius:4px"></div>
<div class="abs" style="left:340px;top:641px;width:53px;text-align:center;font-size:8.3px;font-weight:bold;color:#fb3a30;line-height:9px">Persons</div>
<div class="abs" style="left:695px;top:639.5px;width:61px;text-align:center;font-size:9.5px;color:#a0a0a0;line-height:10px">Institutions</div>


<svg class="abs" style="left:0;top:0" width="912" height="661" viewBox="0 0 912 661">
<circle cx="362" cy="495.7" r="64.35" fill="none" stroke="#2e8b89" stroke-width="22.30"/><path d="M437.00,487.02 A75.5,75.5 0 0 1 437.32,490.43 L415.07,491.99 A53.199999999999996,53.199999999999996 0 0 0 414.85,489.59 Z" fill="#29b5e0" stroke="#fff" stroke-width="0.9" stroke-linejoin="round"/><path d="M437.32,490.43 A75.5,75.5 0 0 1 437.50,495.96 L415.20,495.89 A53.199999999999996,53.199999999999996 0 0 0 415.07,491.99 Z" fill="#7dd8c8" stroke="#fff" stroke-width="0.9" stroke-linejoin="round"/><path d="M437.50,495.96 A75.5,75.5 0 0 1 437.26,501.76 L415.03,499.97 A53.199999999999996,53.199999999999996 0 0 0 415.20,495.89 Z" fill="#283f88" stroke="#fff" stroke-width="0.9" stroke-linejoin="round"/><path d="M437.26,501.76 A75.5,75.5 0 0 1 436.78,506.08 L414.70,503.01 A53.199999999999996,53.199999999999996 0 0 0 415.03,499.97 Z" fill="#3a7fbf" stroke="#fff" stroke-width="0.9" stroke-linejoin="round"/><path d="M436.78,506.08 A75.5,75.5 0 0 1 436.24,509.46 L414.31,505.39 A53.199999999999996,53.199999999999996 0 0 0 414.70,503.01 Z" fill="#45ade0" stroke="#fff" stroke-width="0.9" stroke-linejoin="round"/><path d="M436.24,509.46 A75.5,75.5 0 0 1 435.62,512.43 L413.88,507.49 A53.199999999999996,53.199999999999996 0 0 0 414.31,505.39 Z" fill="#4a90e2" stroke="#fff" stroke-width="0.9" stroke-linejoin="round"/><path d="M435.62,512.43 A75.5,75.5 0 0 1 432.86,521.77 L411.93,514.07 A53.199999999999996,53.199999999999996 0 0 0 413.88,507.49 Z" fill="#1c8cff" stroke="#fff" stroke-width="0.9" stroke-linejoin="round"/><path d="M432.86,521.77 A75.5,75.5 0 0 1 430.65,527.13 L410.37,517.85 A53.199999999999996,53.199999999999996 0 0 0 411.93,514.07 Z" fill="#0a1ed2" stroke="#fff" stroke-width="0.9" stroke-linejoin="round"/>
<path d="M729.60,420.10 A75.4,75.4 0 0 1 805.00,495.50 L782.50,495.50 A52.900000000000006,52.900000000000006 0 0 0 729.60,442.60 Z" fill="#2e8b89" stroke="#fff" stroke-width="1" stroke-linejoin="round"/><path d="M805.00,495.50 A75.4,75.4 0 0 1 747.64,568.71 L742.26,546.86 A52.900000000000006,52.900000000000006 0 0 0 782.50,495.50 Z" fill="#283f88" stroke="#fff" stroke-width="1" stroke-linejoin="round"/><path d="M747.64,568.71 A75.4,75.4 0 0 1 679.60,551.94 L694.52,535.10 A52.900000000000006,52.900000000000006 0 0 0 742.26,546.86 Z" fill="#3a7fbf" stroke="#fff" stroke-width="1" stroke-linejoin="round"/><path d="M679.60,551.94 A75.4,75.4 0 0 1 662.84,530.54 L682.76,520.08 A52.900000000000006,52.900000000000006 0 0 0 694.52,535.10 Z" fill="#45ade0" stroke="#fff" stroke-width="1" stroke-linejoin="round"/><path d="M662.84,530.54 A75.4,75.4 0 0 1 702.86,425.00 L710.84,446.04 A52.900000000000006,52.900000000000006 0 0 0 682.76,520.08 Z" fill="#4a90e2" stroke="#fff" stroke-width="1" stroke-linejoin="round"/><path d="M702.86,425.00 A75.4,75.4 0 0 1 711.56,422.29 L716.94,444.14 A52.900000000000006,52.900000000000006 0 0 0 710.84,446.04 Z" fill="#1c8cff" stroke="#fff" stroke-width="1" stroke-linejoin="round"/><path d="M711.56,422.29 A75.4,75.4 0 0 1 729.60,420.10 L729.60,442.60 A52.900000000000006,52.900000000000006 0 0 0 716.94,444.14 Z" fill="#0a1ed2" stroke="#fff" stroke-width="1" stroke-linejoin="round"/>
<text x="775.0" y="453.7" font-size="10.5" fill="#fff" text-anchor="middle" font-family="Liberation Sans">13</text><text x="780.1" y="538.7" font-size="10.5" fill="#fff" text-anchor="middle" font-family="Liberation Sans">11</text><text x="714.2" y="561.4" font-size="10.5" fill="#fff" text-anchor="middle" font-family="Liberation Sans">8</text><text x="679.1" y="538.7" font-size="10.5" fill="#fff" text-anchor="middle" font-family="Liberation Sans">3</text><text x="669.6" y="476.4" font-size="10.5" fill="#fff" text-anchor="middle" font-family="Liberation Sans">14</text><text x="721.9" y="435.4" font-size="10.5" fill="#fff" text-anchor="middle" font-family="Liberation Sans">2</text>
<g fill="none" stroke="#8e8e8e" stroke-width="1">
<rect x="718.6" y="615.6" width="14.8" height="20"/>
<rect x="721" y="617.6" width="3.6" height="2.3" rx="0.5"/><rect x="727.4" y="617.6" width="3.6" height="2.3" rx="0.5"/>
<rect x="721" y="621.8" width="3.6" height="2.3" rx="0.5"/><rect x="727.4" y="621.8" width="3.6" height="2.3" rx="0.5"/>
<rect x="721" y="626" width="3.6" height="2.3" rx="0.5"/><rect x="727.4" y="626" width="3.6" height="2.3" rx="0.5"/>
<rect x="721" y="630.2" width="3.6" height="2.3" rx="0.5"/><path d="M727.4,635.6 L727.4,630.4 L731,630.4 L731,635.6"/>
</g>
<path d="M364,627.4 Q362.2,625 362.4,620.6 Q362.8,616.2 366.8,616.2 Q370.8,616.2 371.2,620.6 Q371.4,625 369.6,627.4 L369.6,629 Q374.8,630.4 375.3,633.6 L375.3,634.4 L358.3,634.4 L358.3,633.6 Q358.8,630.4 364,629 Z" fill="none" stroke="#fb3a30" stroke-width="1.15" stroke-linejoin="round"/>
</svg>
<!-- side tab -->
<div class="abs" style="left:176px;top:352px;width:25.2px;height:71.3px;background:#2fb0c6;border-radius:5px;border-left:1px solid #2aa3bb"></div>
<svg class="abs" style="left:176px;top:376px" width="26" height="26" viewBox="176 376 26 26"><path d="M192.2,385.9 L185.6,389.1 L192.2,392.3" fill="none" stroke="#fff" stroke-width="1.9" stroke-linecap="round" stroke-linejoin="round"/></svg>
</body></html>
